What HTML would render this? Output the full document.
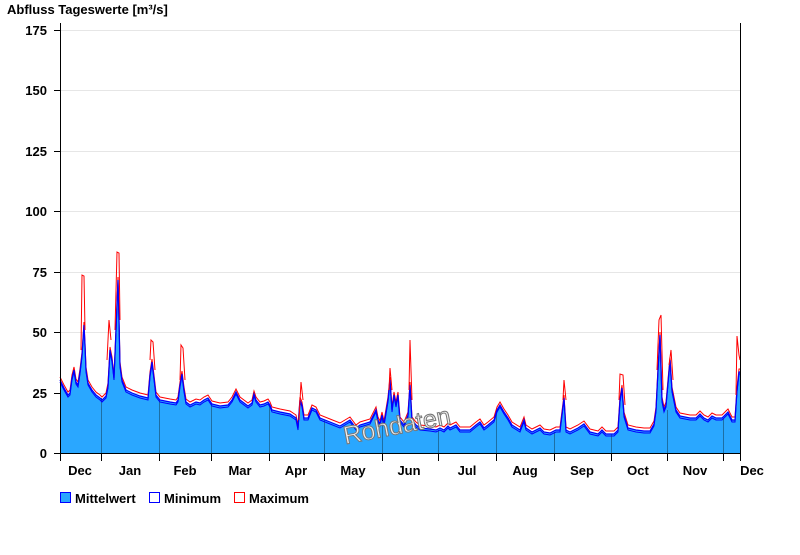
<!DOCTYPE html>
<html><head><meta charset="utf-8"><style>
body{margin:0;background:#fff;width:800px;height:550px;overflow:hidden;font-family:"Liberation Sans",Arial,sans-serif}
svg text{font-family:"Liberation Sans",Arial,sans-serif;font-weight:bold;font-size:13px;fill:#000}
</style></head><body>
<svg width="800" height="550" viewBox="0 0 800 550" xmlns="http://www.w3.org/2000/svg">
<text x="7" y="14" font-size="13">Abfluss Tageswerte [m³/s]</text>
<g stroke="#e6e6e6" stroke-width="1">
<line x1="61" y1="30.5" x2="740" y2="30.5"/><line x1="61" y1="90.5" x2="740" y2="90.5"/>
<line x1="61" y1="151.5" x2="740" y2="151.5"/><line x1="61" y1="211.5" x2="740" y2="211.5"/>
<line x1="61" y1="272.5" x2="740" y2="272.5"/><line x1="61" y1="332.5" x2="740" y2="332.5"/>
<line x1="61" y1="393.5" x2="740" y2="393.5"/>
</g>
<g text-anchor="end">
<text x="47" y="35">175</text><text x="47" y="95">150</text><text x="47" y="156">125</text>
<text x="47" y="216">100</text><text x="47" y="277">75</text><text x="47" y="337">50</text>
<text x="47" y="398">25</text><text x="47" y="458">0</text>
</g>
<defs>
<polyline id="ln" points="60,380 64,388 68,395 70,393 72,378 74,370 76,382 78,385 80,372 82,355 84,325 85,345 86,370 88,383 92,390 96,395 100,398 102,400 106,396 108,386 110,350 112,360 114,378 116,330 118,280 119,320 120,365 122,380 126,390 132,393 140,396 148,398 150,375 152,362 154,378 156,395 160,400 170,402 176,403 178,400 180,385 182,374 184,390 186,402 190,405 196,402 200,403 204,400 208,398 212,404 220,406 228,405 232,400 236,392 240,400 248,406 252,403 254,394 256,400 260,405 264,404 268,402 270,405 272,410 280,412 290,414 296,418 298,428 300,400 302,405 304,418 308,418 312,408 316,410 320,418 330,422 340,426 350,420 356,428 360,425 370,422 376,410 378,420 380,424 382,415 384,424 388,400 390,380 392,410 394,395 396,405 398,395 400,420 404,425 408,415 410,385 412,420 416,425 420,428 430,429 436,430 440,428 444,430 448,426 450,428 456,425 460,430 470,430 476,425 480,422 484,428 488,425 494,420 497,410 500,405 504,412 508,418 512,425 520,430 524,420 526,428 532,432 540,428 544,432 550,433 556,430 560,430 564,398 566,430 570,432 578,428 584,424 590,432 598,434 602,430 606,434 614,434 618,430 620,400 622,388 624,415 628,428 636,430 644,431 650,431 654,424 656,410 658,370 660,335 662,400 664,410 666,405 670,360 672,390 676,410 680,416 690,418 696,418 700,414 704,418 708,420 712,416 716,418 722,418 728,412 732,420 735,420 737,390 739,372 740,372"/>
</defs>
<polygon fill="#2aa7ff" points="60,453 60,380 64,388 68,395 70,393 72,378 74,370 76,382 78,385 80,372 82,355 84,325 85,345 86,370 88,383 92,390 96,395 100,398 102,400 106,396 108,386 110,350 112,360 114,378 116,330 118,280 119,320 120,365 122,380 126,390 132,393 140,396 148,398 150,375 152,362 154,378 156,395 160,400 170,402 176,403 178,400 180,385 182,374 184,390 186,402 190,405 196,402 200,403 204,400 208,398 212,404 220,406 228,405 232,400 236,392 240,400 248,406 252,403 254,394 256,400 260,405 264,404 268,402 270,405 272,410 280,412 290,414 296,418 298,428 300,400 302,405 304,418 308,418 312,408 316,410 320,418 330,422 340,426 350,420 356,428 360,425 370,422 376,410 378,420 380,424 382,415 384,424 388,400 390,380 392,410 394,395 396,405 398,395 400,420 404,425 408,415 410,385 412,420 416,425 420,428 430,429 436,430 440,428 444,430 448,426 450,428 456,425 460,430 470,430 476,425 480,422 484,428 488,425 494,420 497,410 500,405 504,412 508,418 512,425 520,430 524,420 526,428 532,432 540,428 544,432 550,433 556,430 560,430 564,398 566,430 570,432 578,428 584,424 590,432 598,434 602,430 606,434 614,434 618,430 620,400 622,388 624,415 628,428 636,430 644,431 650,431 654,424 656,410 658,370 660,335 662,400 664,410 666,405 670,360 672,390 676,410 680,416 690,418 696,418 700,414 704,418 708,420 712,416 716,418 722,418 728,412 732,420 735,420 737,390 739,372 740,372 740,453"/>
<g stroke="#1d6fa5" stroke-width="1">
<line x1="101.5" y1="398" x2="101.5" y2="453"/><line x1="159.5" y1="400" x2="159.5" y2="453"/>
<line x1="211.5" y1="404" x2="211.5" y2="453"/><line x1="269.5" y1="405" x2="269.5" y2="453"/>
<line x1="324.5" y1="420" x2="324.5" y2="453"/><line x1="382.5" y1="418" x2="382.5" y2="453"/>
<line x1="438.5" y1="430" x2="438.5" y2="453"/><line x1="496.5" y1="410" x2="496.5" y2="453"/>
<line x1="554.5" y1="432" x2="554.5" y2="453"/><line x1="611.5" y1="434" x2="611.5" y2="453"/>
<line x1="667.5" y1="410" x2="667.5" y2="453"/><line x1="723.5" y1="418" x2="723.5" y2="453"/>
</g>
<use href="#ln" fill="none" stroke="#0000ff" stroke-width="1" transform="translate(0,2)"/>
<use href="#ln" fill="none" stroke="#ff0000" stroke-width="1" transform="translate(0,-3)"/>
<use href="#ln" fill="none" stroke="#0000ff" stroke-width="1.2"/>
<g fill="none" stroke="#ff0000" stroke-width="1">
<polyline points="81,350 82,275 84,276 85,330"/>
<polyline points="107,360 109,320 111,340"/>
<polyline points="115,330 117,252 119,253 120,320"/>
<polyline points="150,360 151,340 153,342 155,370"/>
<polyline points="180,380 181,345 183,348 185,380"/>
<polyline points="299,420 301,382 303,400"/>
<polyline points="389,390 390,368 392,390"/>
<polyline points="409,390 410,340 412,400"/>
<polyline points="563,400 564,380 566,400"/>
<polyline points="619,400 620,374 623,375 625,405"/>
<polyline points="657,370 659,320 661,315 663,390"/>
<polyline points="669,365 671,350 673,380"/>
<polyline points="736,395 737,336 739,355 740,360"/>
</g>
<text x="397" y="434" text-anchor="middle" transform="rotate(-11 397 426)" style="font-size:25px;font-weight:normal;fill:#eeeeee;stroke:#777;stroke-width:1">Rohdaten</text>
<line x1="60.5" y1="23" x2="60.5" y2="454" stroke="#000"/>
<line x1="740.5" y1="23" x2="740.5" y2="454" stroke="#000"/>
<line x1="54" y1="453.5" x2="741" y2="453.5" stroke="#000"/>
<g stroke="#000">
<line x1="54" y1="30.5" x2="60" y2="30.5"/><line x1="54" y1="90.5" x2="60" y2="90.5"/>
<line x1="54" y1="151.5" x2="60" y2="151.5"/><line x1="54" y1="211.5" x2="60" y2="211.5"/>
<line x1="54" y1="272.5" x2="60" y2="272.5"/><line x1="54" y1="332.5" x2="60" y2="332.5"/>
<line x1="54" y1="393.5" x2="60" y2="393.5"/>
<line x1="60.5" y1="453" x2="60.5" y2="461"/><line x1="101.5" y1="453" x2="101.5" y2="461"/>
<line x1="159.5" y1="453" x2="159.5" y2="461"/><line x1="211.5" y1="453" x2="211.5" y2="461"/>
<line x1="269.5" y1="453" x2="269.5" y2="461"/><line x1="324.5" y1="453" x2="324.5" y2="461"/>
<line x1="382.5" y1="453" x2="382.5" y2="461"/><line x1="438.5" y1="453" x2="438.5" y2="461"/>
<line x1="496.5" y1="453" x2="496.5" y2="461"/><line x1="554.5" y1="453" x2="554.5" y2="461"/>
<line x1="611.5" y1="453" x2="611.5" y2="461"/><line x1="667.5" y1="453" x2="667.5" y2="461"/>
<line x1="723.5" y1="453" x2="723.5" y2="461"/><line x1="740.5" y1="453" x2="740.5" y2="461"/>
</g>
<g text-anchor="middle">
<text x="80" y="475">Dec</text><text x="130" y="475">Jan</text><text x="185" y="475">Feb</text>
<text x="240" y="475">Mar</text><text x="296" y="475">Apr</text><text x="353" y="475">May</text>
<text x="409" y="475">Jun</text><text x="467" y="475">Jul</text><text x="525" y="475">Aug</text>
<text x="582" y="475">Sep</text><text x="638" y="475">Oct</text><text x="695" y="475">Nov</text>
<text x="752" y="475">Dec</text>
</g>
<rect x="60.5" y="492.5" width="10" height="10" fill="#2aa7ff" stroke="#0000ff"/>
<text x="75" y="503">Mittelwert</text>
<rect x="149.5" y="492.5" width="10" height="10" fill="#fff" stroke="#0000ff"/>
<text x="164" y="503">Minimum</text>
<rect x="234.5" y="492.5" width="10" height="10" fill="#fff" stroke="#ff0000"/>
<text x="249" y="503">Maximum</text>
</svg>
</body></html>
